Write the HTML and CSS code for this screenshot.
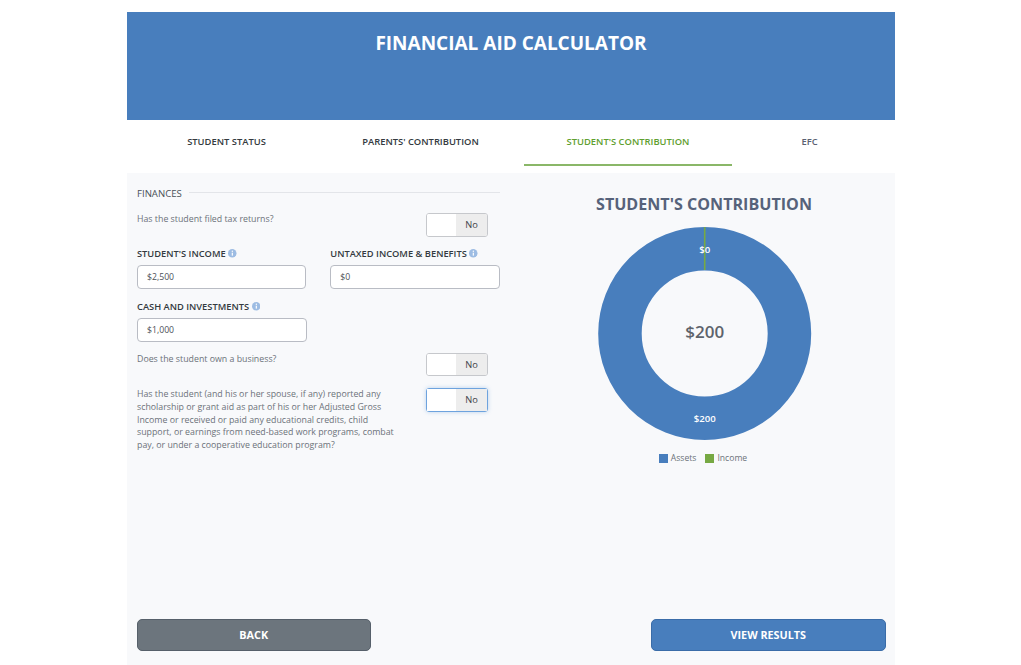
FILE: index.html
```html
<!DOCTYPE html>
<html lang="en">
<head>
<meta charset="utf-8">
<title>Financial Aid Calculator</title>
<link rel="stylesheet" href="styles.css">
</head>
<body>
<main class="app">
  <header class="banner"><h1>FINANCIAL AID CALCULATOR</h1></header>
  <nav class="tabs">
    <a class="tab tab-1">STUDENT STATUS</a>
    <a class="tab tab-2">PARENTS' CONTRIBUTION</a>
    <a class="tab tab-3 active">STUDENT'S CONTRIBUTION</a>
    <a class="tab tab-4">EFC</a>
  </nav>
  <section class="panel">
    <div class="columns">
      <div class="form">
        <div class="legend"><span>FINANCES</span><i></i></div>
        <div class="question q-first">
          <p>Has the student filed tax returns?</p>
          <div class="toggle"><span class="off"></span><span class="no">No</span></div>
        </div>
        <div class="fields f-first">
          <label class="field"><span class="lbl">STUDENT'S INCOME <svg class="info" viewBox="0 0 16 16"><circle cx="8" cy="8" r="8"/><rect x="7" y="7" width="2.4" height="5.5" fill="#f8f9fb"/><circle cx="8.2" cy="4.4" r="1.4" fill="#f8f9fb"/></svg></span><span class="input">$2,500</span></label>
          <label class="field"><span class="lbl">UNTAXED INCOME &amp; BENEFITS <svg class="info" viewBox="0 0 16 16"><circle cx="8" cy="8" r="8"/><rect x="7" y="7" width="2.4" height="5.5" fill="#f8f9fb"/><circle cx="8.2" cy="4.4" r="1.4" fill="#f8f9fb"/></svg></span><span class="input">$0</span></label>
        </div>
        <div class="fields f-second">
          <label class="field"><span class="lbl">CASH AND INVESTMENTS <svg class="info" viewBox="0 0 16 16"><circle cx="8" cy="8" r="8"/><rect x="7" y="7" width="2.4" height="5.5" fill="#f8f9fb"/><circle cx="8.2" cy="4.4" r="1.4" fill="#f8f9fb"/></svg></span><span class="input">$1,000</span></label>
        </div>
        <div class="question q-second">
          <p>Does the student own a business?</p>
          <div class="toggle"><span class="off"></span><span class="no">No</span></div>
        </div>
        <div class="question q-third">
          <p>Has the student (and his or her spouse, if any) reported any scholarship or grant aid as part of his or her Adjusted Gross Income or received or paid any educational credits, child support, or earnings from need-based work programs, combat pay, or under a cooperative education program?</p>
          <div class="toggle focus"><span class="off"></span><span class="no">No</span></div>
        </div>
      </div>
      <div class="chart">
        <h2>STUDENT'S CONTRIBUTION</h2>
        <div class="donut">
          <svg viewBox="0 0 216 216" width="216" height="216">
            <circle cx="108.7" cy="108.4" r="84.75" fill="none" stroke="#487ebd" stroke-width="43.5"/>
            <rect x="107.9" y="2" width="1.6" height="43" fill="#77a943"/>
            <text x="108.7" y="28" class="slice">$0</text>
            <text x="108.7" y="197" class="slice">$200</text>
            <text x="108.7" y="113" class="total">$200</text>
          </svg>
        </div>
        <div class="key">
          <span class="key-item"><b class="swatch blue"></b>Assets</span>
          <span class="key-item"><b class="swatch green"></b>Income</span>
        </div>
      </div>
    </div>
    <div class="actions">
      <button class="btn back">BACK</button>
      <button class="btn next">VIEW RESULTS</button>
    </div>
  </section>
</main>
</body>
</html>
```
FILE: styles.css
```css
* { box-sizing: border-box; }
html, body { margin: 0; height: 100%; background: #fff; }
body { font-family: "Open Sans", "Noto Sans", sans-serif; color: #495057; overflow: hidden; }
.app { width: 768px; height: 665px; margin: 0 0 0 127px; padding-top: 12px; display: flex; flex-direction: column; }
.banner { height: 108px; background: #487ebd; padding-top: 20px; flex: none; }
.banner h1 { margin: 0; color: #fff; font-size: 19px; line-height: 23px; font-weight: 700; text-align: center; }
.tabs { height: 53px; flex: none; display: flex; padding-left: 7px; background: #fff; }
.tab { height: 46px; display: flex; align-items: center; justify-content: center; font-size: 9.4px; font-weight: 600; color: #343a40; padding-bottom: 1px; border-bottom: 2px solid transparent; }
.tab-1 { width: 185px; }
.tab-2 { width: 203px; margin-right: 2px; }
.tab-3 { width: 208px; }
.tab-4 { width: 155px; color: #5a6072; }
.tab.active { color: #5fa02f; border-bottom-color: #8ab768; }
.panel { flex: 1; background: #f8f9fb; display: flex; flex-direction: column; padding: 0 9.5px 14px 9.5px; }
.columns { flex: 1; display: flex; }
.form { width: 363px; flex: none; padding-top: 14px; }
.legend { display: flex; align-items: center; gap: 7px; font-size: 9.6px; line-height: 14px; color: #495057; padding-left: .5px; }
.legend i { flex: 1; height: 1px; background: #e3e5e9; margin-top: -3px; }
.question { display: flex; justify-content: space-between; padding-right: 11.5px; }
.question p { margin: 0; width: 263px; padding-left: .5px; font-size: 8.8px; line-height: 12.75px; color: #6c727a; }
.q-first { margin-top: 12px; }
.q-second { margin-top: 11px; }
.q-third { margin-top: 12px; }
.toggle { width: 62px; height: 23.5px; display: flex; border: 1px solid #c6c8cc; border-radius: 3px; background: #fff; overflow: hidden; flex: none; }
.toggle.focus { border-color: #6ea3de; box-shadow: 0 0 4px rgba(110,163,222,.45); overflow: visible; }
.off { width: 29px; background: #fff; }
.no { flex: 1; background: #ededed; font-size: 9.3px; line-height: 21.5px; text-align: center; color: #3d4248; }
.fields { display: flex; gap: 23.5px; }
.f-first { margin-top: 10px; }
.f-second { margin-top: 11px; }
.field { width: 170px; display: block; }
.lbl { display: block; height: 18px; font-size: 9.3px; line-height: 14px; font-weight: 600; color: #343a40; white-space: nowrap; padding-left: .5px; }
.info { width: 8.5px; height: 8.5px; fill: #9dbce3; vertical-align: -1px; }
.input { display: block; height: 24px; background: #fff; border: 1px solid #b9bcc4; border-radius: 4px; padding-left: 9.5px; font-size: 8.7px; line-height: 22px; color: #4c5258; }
.chart { flex: 1; display: flex; flex-direction: column; align-items: center; padding: 20px 0 0 2px; margin-left: 21px; width: 365px; }
.chart h2 { margin: 0; font-size: 16.1px; line-height: 22px; font-weight: 700; color: #56627a; }
.donut { height: 216px; width: 216px; margin-top: 10px; }
.donut svg { display: block; }
.slice { font-family: "Open Sans", sans-serif; font-size: 9.6px; font-weight: 600; fill: #fff; text-anchor: middle; }
.total { font-family: "Open Sans", sans-serif; font-size: 17px; font-weight: 600; fill: #5d636b; text-anchor: middle; }
.key { display: flex; gap: 9px; margin: 11px 0 0 -2px; font-size: 8.6px; line-height: 12px; color: #6c727a; }
.key-item { display: flex; align-items: center; gap: 3px; }
.swatch { width: 9px; height: 9px; display: block; }
.blue { background: #487ebd; }
.green { background: #77a943; }
.actions { display: flex; justify-content: space-between; flex: none; }
.btn { width: 234.5px; height: 32px; padding: 0 0 2px; border-radius: 5px; color: #fff; font: 700 10.8px "Open Sans", sans-serif; cursor: pointer; }
.back { background: #6c757d; border: 1px solid #56606a; }
.next { background: #487ebd; border: 1px solid #3a6ca8; }
```
